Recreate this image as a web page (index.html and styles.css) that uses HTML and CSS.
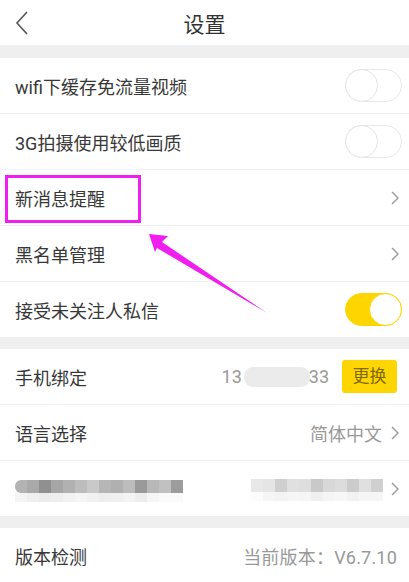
FILE: index.html
```html
<!DOCTYPE html>
<html lang="zh-CN">

<head>
    <meta charset="UTF-8">
    <meta name="viewport" content="width=device-width, initial-scale=1.0">
    <title>设置</title>
    <link rel="stylesheet" href="styles.css">
</head>

<body>
    <div class="page">

        <div class="header">
            <div class="back">
                <svg width="14" height="24" viewBox="0 0 14 24">
                    <polyline points="12,1 2,12 12,23" fill="none" stroke="#555" stroke-width="1.6" />
                </svg>
            </div>
            <div class="title">设置</div>
            <div></div>
        </div>

        <div class="gap first-gap"></div>

        <div class="group">
            <div class="row">
                <span class="label">wifi下缓存免流量视频</span>
                <span class="switch"><span class="knob"></span></span>
            </div>
            <div class="row">
                <span class="label">3G拍摄使用较低画质</span>
                <span class="switch"><span class="knob"></span></span>
            </div>
            <div class="row">
                <span class="label">新消息提醒</span>
                <svg class="chevron" width="8" height="14" viewBox="0 0 8 14">
                    <polyline points="1,1 7,7 1,13" fill="none" stroke="#999" stroke-width="1.4" />
                </svg>
                <div class="highlight"></div>
            </div>
            <div class="row">
                <span class="label">黑名单管理</span>
                <svg class="chevron" width="8" height="14" viewBox="0 0 8 14">
                    <polyline points="1,1 7,7 1,13" fill="none" stroke="#999" stroke-width="1.4" />
                </svg>
            </div>
            <div class="row">
                <span class="label">接受未关注人私信</span>
                <span class="switch on"><span class="knob"></span></span>
            </div>
        </div>

        <div class="gap"></div>

        <div class="group">
            <div class="row">
                <span class="label">手机绑定</span>
                <span class="phone">13<span class="blur"></span>33</span>
                <span class="change-btn">更换</span>
            </div>
            <div class="row">
                <span class="label">语言选择</span>
                <span class="value">简体中文</span>
                <svg class="chevron" width="8" height="14" viewBox="0 0 8 14">
                    <polyline points="1,1 7,7 1,13" fill="none" stroke="#999" stroke-width="1.4" />
                </svg>
            </div>
            <div class="row">
                <div class="mosaic left-mosaic">
                    <div class="mosaic-top">
                        <i style="background:#b3b3b3"></i><i style="background:#a9a9a9"></i><i style="background:#909090"></i><i style="background:#a6a6a6"></i><i style="background:#b1b1b1"></i><i style="background:#bdbdbd"></i><i style="background:#c9c9c9"></i><i style="background:#b6b6b6"></i><i style="background:#b0b0b0"></i><i style="background:#bcbcbc"></i><i style="background:#9a9a9a"></i><i style="background:#b8b8b8"></i><i style="background:#c1c1c1"></i><i style="background:#9c9c9c"></i>
                    </div>
                    <div class="mosaic-bottom">
                        <i style="background:#f4f4f4"></i><i style="background:#efefef"></i><i style="background:#ececec"></i><i style="background:#eeeeee"></i><i style="background:#f2f2f2"></i><i style="background:#f5f5f5"></i><i style="background:#f1f1f1"></i><i style="background:#eeeeee"></i><i style="background:#f0f0f0"></i><i style="background:#f4f4f4"></i><i style="background:#ededed"></i><i style="background:#f6f6f6"></i><i style="background:#fafafa"></i><i style="background:#fafafa"></i>
                    </div>
                </div>
                <div class="mosaic right-mosaic">
                    <div class="mosaic-top">
                        <i style="background:#e8e8e8"></i><i style="background:#e5e5e5"></i><i style="background:#cfcfcf"></i><i style="background:#e0e0e0"></i><i style="background:#dedede"></i><i style="background:#c9c9c9"></i><i style="background:#d8d8d8"></i><i style="background:#dcdcdc"></i><i style="background:#cccccc"></i><i style="background:#e0e0e0"></i><i style="background:#d0d0d0"></i>
                    </div>
                    <div class="mosaic-bottom">
                        <i style="background:#fcfcfc"></i><i style="background:#f6f6f6"></i><i style="background:#f3f3f3"></i><i style="background:#f6f6f6"></i><i style="background:#f5f5f5"></i><i style="background:#f0f0f0"></i><i style="background:#f5f5f5"></i><i style="background:#f7f7f7"></i><i style="background:#f2f2f2"></i><i style="background:#f6f6f6"></i><i style="background:#f6f6f6"></i>
                    </div>
                </div>
                <svg class="chevron" width="8" height="14" viewBox="0 0 8 14">
                    <polyline points="1,1 7,7 1,13" fill="none" stroke="#999" stroke-width="1.4" />
                </svg>
            </div>
        </div>

        <div class="gap"></div>

        <div class="group">
            <div class="row">
                <span class="label">版本检测</span>
                <span class="value version">当前版本：V6.7.10</span>
            </div>
        </div>

        <svg class="arrow" width="409" height="582" viewBox="0 0 409 582">
            <polygon points="149,234 168,236 162,242 267,313 157,248 155,252" fill="#f01ff0" />
        </svg>

    </div>
</body>

</html>
```

FILE: styles.css
```css
body {
    margin: 0;
    background: #fff;
    font-family: Roboto, "Noto Sans CJK SC", sans-serif;
    color: #333;
}

.page {
    position: relative;
    width: 409px;
    height: 582px;
    overflow: hidden;
}

.header {
    display: grid;
    grid-template-columns: 1fr auto 1fr;
    align-items: center;
    height: 45px;
}

.back {
    display: flex;
    align-items: center;
    padding-left: 15px;
}

.title {
    font-size: 21px;
    color: #333;
}

.gap {
    height: 12px;
    background: #efefef;
}

.first-gap {
    height: 13px;
}

.row {
    position: relative;
    display: flex;
    align-items: center;
    height: 55px;
    padding: 0 7px 0 15px;
    border-bottom: 1px solid #f1f1f1;
}

.row:last-child {
    border-bottom: none;
}

.label {
    flex: 1;
    font-size: 18px;
    color: #383838;
}

.value {
    font-size: 18px;
    color: #999;
}

.version {
    margin-right: 5px;
    letter-spacing: 0.2px;
}

.chevron {
    margin: 0 3px 0 10px;
}

.value + .chevron {
    margin-left: 9px;
}

.switch {
    position: relative;
    box-sizing: border-box;
    width: 57px;
    height: 33px;
    border-radius: 17px;
    border: 1px solid #e8e8e8;
    background: #fff;
}

.switch .knob {
    position: absolute;
    top: -1px;
    left: -1px;
    box-sizing: border-box;
    width: 33px;
    height: 33px;
    border-radius: 50%;
    border: 1.5px solid #e4e4e4;
    background: #fff;
}

.switch.on {
    background: #ffd500;
    border-color: #ffd500;
}

.switch.on .knob {
    left: auto;
    right: -1px;
    border-color: #ffd500;
}

.phone {
    display: flex;
    align-items: center;
    font-size: 18px;
    color: #999;
}

.blur {
    display: inline-block;
    width: 66px;
    height: 20px;
    margin: 0 -1px 0 2px;
    border-radius: 9px;
    background: #ebebeb;
}

.change-btn {
    margin: 0 5px 0 13px;
    width: 55px;
    height: 33px;
    line-height: 33px;
    text-align: center;
    border-radius: 3px;
    background: #ffd500;
    color: #7e6a00;
    font-size: 17px;
}

.mosaic {
    display: flex;
    flex-direction: column;
}

.mosaic-top,
.mosaic-bottom {
    display: flex;
}

.mosaic i {
    display: block;
    width: 12px;
}

.mosaic-top i {
    height: 13px;
}

.mosaic-bottom i {
    height: 9px;
}

.left-mosaic .mosaic-top {
    border-radius: 6px 0 0 6px;
    overflow: hidden;
}

.left-mosaic {
    margin-top: 4px;
}

.right-mosaic {
    margin-left: auto;
    margin-top: 2px;
}

.right-mosaic + .chevron {
    margin-left: 8px;
}

.highlight {
    position: absolute;
    left: 5px;
    top: 5px;
    width: 130px;
    height: 42px;
    border: 3px solid #f01ff0;
}

.arrow {
    position: absolute;
    left: 0;
    top: 0;
    pointer-events: none;
}
```
